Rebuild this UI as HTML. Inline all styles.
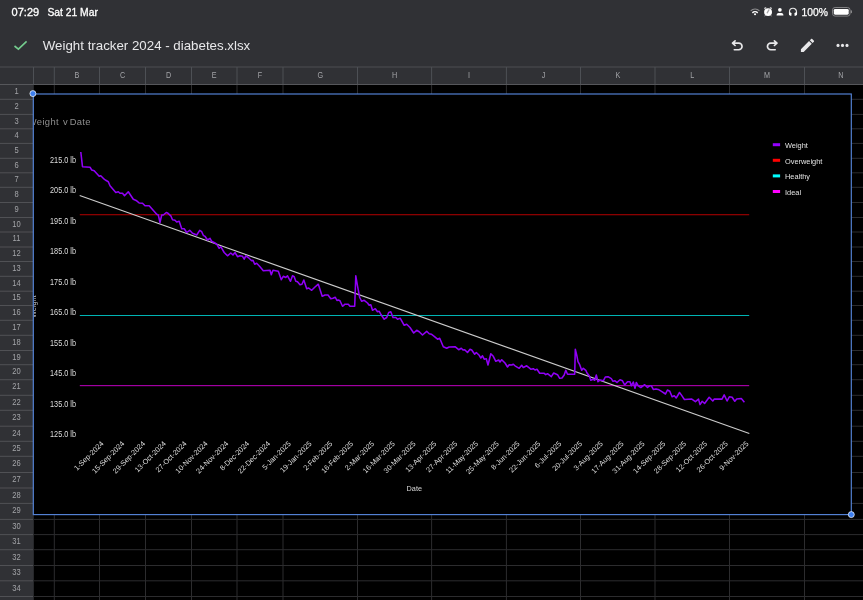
<!DOCTYPE html><html><head><meta charset="utf-8"><style>
html,body{margin:0;padding:0;width:863px;height:600px;overflow:hidden;background:#303135;}
svg{display:block;} body>svg{will-change:transform;}
text{font-family:"Liberation Sans",sans-serif;}
</style></head><body>
<svg width="863" height="600" viewBox="0 0 863 600">
<rect x="0" y="0" width="863" height="600" fill="#303135"/>

<text x="11.6" y="15.7" font-size="10.8" fill="#ffffff" stroke="#ffffff" stroke-width="0.3" textLength="27.6" lengthAdjust="spacingAndGlyphs">07:29</text>
<text x="47.4" y="15.7" font-size="10.8" fill="#ffffff" stroke="#ffffff" stroke-width="0.3" textLength="50.5" lengthAdjust="spacingAndGlyphs">Sat 21 Mar</text>
<text x="801.6" y="15.9" font-size="10.9" fill="#ffffff" stroke="#ffffff" stroke-width="0.25" textLength="26.4" lengthAdjust="spacingAndGlyphs">100%</text>
<rect x="832.5" y="7.5" width="17.6" height="8.6" rx="2.6" fill="none" stroke="#8a8a8c" stroke-width="0.9"/>
<rect x="833.8" y="8.9" width="14.9" height="5.8" rx="1.4" fill="#ffffff"/>
<rect x="850.8" y="10.2" width="1.2" height="3" rx="0.6" fill="#8a8a8c"/>
<path d="M750.67,10.82 A6.2,6.2 0 0 1 759.43,10.82" stroke="#8c8c8e" stroke-width="1.1" fill="none"/>
<path d="M752.4,12.85 A3.75,3.75 0 0 1 757.7,12.85" stroke="#ffffff" stroke-width="1.5" fill="none"/>
<circle cx="755.05" cy="14.3" r="1.05" fill="#fff"/>
<circle cx="768.05" cy="12.1" r="3.95" fill="#fff"/>
<ellipse cx="765.2" cy="8.1" rx="1.3" ry="0.9" transform="rotate(-40 765.2 8.1)" fill="#b8b8ba"/><ellipse cx="770.9" cy="8.1" rx="1.3" ry="0.9" transform="rotate(40 770.9 8.1)" fill="#b8b8ba"/>
<path d="M764.6,15.9 L765.8,15 M771.5,15.9 L770.3,15" stroke="#d0d0d2" stroke-width="0.9"/>
<path d="M767.2,12.8 L768.9,9.9" stroke="#a8a8aa" stroke-width="1.3" stroke-linecap="round"/>
<circle cx="779.9" cy="9.8" r="1.85" fill="#fff"/><path d="M776.6,15.5 V14.9 C776.6,13.3 778.2,13.0 780,13.0 C781.8,13.0 783.4,13.3 783.4,14.9 V15.5 Z" fill="#fff"/>
<path d="M789.5,14.0 V11.7 A3.5,3.5 0 0 1 796.5,11.7 V14.0" stroke="#e8e8e8" stroke-width="1.15" fill="none"/>
<path d="M789.0,12.3 Q790.6,12.0 791.6,13.2 L791.3,15.9 Q789.4,15.9 789.0,14.6 Z" fill="#fff"/><path d="M797.0,12.3 Q795.4,12.0 794.4,13.2 L794.7,15.9 Q796.6,15.9 797.0,14.6 Z" fill="#fff"/>
<path d="M14.5,46.0 L18.4,49.1 L26.6,41.3" stroke="#74cc8e" stroke-width="1.6" fill="none" stroke-linecap="butt"/>
<text x="42.8" y="49.8" font-size="13.3" fill="#e8e8ea">Weight tracker 2024 - diabetes.xlsx</text>
<path d="M734.3,49.75 H738.75 A3.3,3.3 0 0 0 738.75,43.15 H732.6 M735.1,40.8 L732.5,43.15 L735.1,45.5" stroke="#e8e8ea" stroke-width="1.65" fill="none" stroke-linecap="round" stroke-linejoin="round"/>
<g transform="translate(1509.5,0) scale(-1,1)"><path d="M734.3,49.75 H738.75 A3.3,3.3 0 0 0 738.75,43.15 H732.6 M735.1,40.8 L732.5,43.15 L735.1,45.5" stroke="#e8e8ea" stroke-width="1.65" fill="none" stroke-linecap="round" stroke-linejoin="round"/></g>
<g transform="translate(798.7,36.5) scale(0.735)"><path d="M3 17.25V21h3.75L17.81 9.94l-3.75-3.75L3 17.25zM20.71 7.04c.39-.39.39-1.02 0-1.41l-2.34-2.34c-.39-.39-1.02-.39-1.41 0l-1.83 1.83 3.75 3.75 1.83-1.83z" fill="#e8e8ea"/></g>
<circle cx="838" cy="45.4" r="1.55" fill="#e8e8ea"/>
<circle cx="842.5" cy="45.4" r="1.55" fill="#e8e8ea"/>
<circle cx="847" cy="45.4" r="1.55" fill="#e8e8ea"/>
<rect x="33.8" y="84.5" width="829.2" height="515.5" fill="#000"/>
<rect x="0" y="66.5" width="863" height="1" fill="#4d4e52"/>
<rect x="53.8" y="84.5" width="1" height="515.5" fill="#2c2c2e"/>
<rect x="99.0" y="84.5" width="1" height="515.5" fill="#2c2c2e"/>
<rect x="145.0" y="84.5" width="1" height="515.5" fill="#2c2c2e"/>
<rect x="191.0" y="84.5" width="1" height="515.5" fill="#2c2c2e"/>
<rect x="236.5" y="84.5" width="1" height="515.5" fill="#2c2c2e"/>
<rect x="282.5" y="84.5" width="1" height="515.5" fill="#2c2c2e"/>
<rect x="357.0" y="84.5" width="1" height="515.5" fill="#2c2c2e"/>
<rect x="431.1" y="84.5" width="1" height="515.5" fill="#2c2c2e"/>
<rect x="505.9" y="84.5" width="1" height="515.5" fill="#2c2c2e"/>
<rect x="580.0" y="84.5" width="1" height="515.5" fill="#2c2c2e"/>
<rect x="654.5" y="84.5" width="1" height="515.5" fill="#2c2c2e"/>
<rect x="729.0" y="84.5" width="1" height="515.5" fill="#2c2c2e"/>
<rect x="804.0" y="84.5" width="1" height="515.5" fill="#2c2c2e"/>
<rect x="33.5" y="98.8" width="829.5" height="1" fill="#2c2c2e"/>
<rect x="33.5" y="113.9" width="829.5" height="1" fill="#2c2c2e"/>
<rect x="33.5" y="128.3" width="829.5" height="1" fill="#2c2c2e"/>
<rect x="33.5" y="142.9" width="829.5" height="1" fill="#2c2c2e"/>
<rect x="33.5" y="157.8" width="829.5" height="1" fill="#2c2c2e"/>
<rect x="33.5" y="172.3" width="829.5" height="1" fill="#2c2c2e"/>
<rect x="33.5" y="186.8" width="829.5" height="1" fill="#2c2c2e"/>
<rect x="33.5" y="202.0" width="829.5" height="1" fill="#2c2c2e"/>
<rect x="33.5" y="217.0" width="829.5" height="1" fill="#2c2c2e"/>
<rect x="33.5" y="231.5" width="829.5" height="1" fill="#2c2c2e"/>
<rect x="33.5" y="246.5" width="829.5" height="1" fill="#2c2c2e"/>
<rect x="33.5" y="261.0" width="829.5" height="1" fill="#2c2c2e"/>
<rect x="33.5" y="275.8" width="829.5" height="1" fill="#2c2c2e"/>
<rect x="33.5" y="290.7" width="829.5" height="1" fill="#2c2c2e"/>
<rect x="33.5" y="305.0" width="829.5" height="1" fill="#2c2c2e"/>
<rect x="33.5" y="319.8" width="829.5" height="1" fill="#2c2c2e"/>
<rect x="33.5" y="334.8" width="829.5" height="1" fill="#2c2c2e"/>
<rect x="33.5" y="350.0" width="829.5" height="1" fill="#2c2c2e"/>
<rect x="33.5" y="364.2" width="829.5" height="1" fill="#2c2c2e"/>
<rect x="33.5" y="379.2" width="829.5" height="1" fill="#2c2c2e"/>
<rect x="33.5" y="394.8" width="829.5" height="1" fill="#2c2c2e"/>
<rect x="33.5" y="409.8" width="829.5" height="1" fill="#2c2c2e"/>
<rect x="33.5" y="425.7" width="829.5" height="1" fill="#2c2c2e"/>
<rect x="33.5" y="440.8" width="829.5" height="1" fill="#2c2c2e"/>
<rect x="33.5" y="455.8" width="829.5" height="1" fill="#2c2c2e"/>
<rect x="33.5" y="472.0" width="829.5" height="1" fill="#2c2c2e"/>
<rect x="33.5" y="487.5" width="829.5" height="1" fill="#2c2c2e"/>
<rect x="33.5" y="502.9" width="829.5" height="1" fill="#2c2c2e"/>
<rect x="33.5" y="518.9" width="829.5" height="1" fill="#2c2c2e"/>
<rect x="33.5" y="534.1" width="829.5" height="1" fill="#2c2c2e"/>
<rect x="33.5" y="549.2" width="829.5" height="1" fill="#2c2c2e"/>
<rect x="33.5" y="565.0" width="829.5" height="1" fill="#2c2c2e"/>
<rect x="33.5" y="580.3" width="829.5" height="1" fill="#2c2c2e"/>
<rect x="33.5" y="596.0" width="829.5" height="1" fill="#2c2c2e"/>
<rect x="53.8" y="67" width="1" height="17.5" fill="#4d5055"/>
<rect x="99.0" y="67" width="1" height="17.5" fill="#4d5055"/>
<rect x="145.0" y="67" width="1" height="17.5" fill="#4d5055"/>
<rect x="191.0" y="67" width="1" height="17.5" fill="#4d5055"/>
<rect x="236.5" y="67" width="1" height="17.5" fill="#4d5055"/>
<rect x="282.5" y="67" width="1" height="17.5" fill="#4d5055"/>
<rect x="357.0" y="67" width="1" height="17.5" fill="#4d5055"/>
<rect x="431.1" y="67" width="1" height="17.5" fill="#4d5055"/>
<rect x="505.9" y="67" width="1" height="17.5" fill="#4d5055"/>
<rect x="580.0" y="67" width="1" height="17.5" fill="#4d5055"/>
<rect x="654.5" y="67" width="1" height="17.5" fill="#4d5055"/>
<rect x="729.0" y="67" width="1" height="17.5" fill="#4d5055"/>
<rect x="804.0" y="67" width="1" height="17.5" fill="#4d5055"/>
<rect x="0" y="98.8" width="33" height="1" fill="#505155"/>
<rect x="0" y="113.9" width="33" height="1" fill="#505155"/>
<rect x="0" y="128.3" width="33" height="1" fill="#505155"/>
<rect x="0" y="142.9" width="33" height="1" fill="#505155"/>
<rect x="0" y="157.8" width="33" height="1" fill="#505155"/>
<rect x="0" y="172.3" width="33" height="1" fill="#505155"/>
<rect x="0" y="186.8" width="33" height="1" fill="#505155"/>
<rect x="0" y="202.0" width="33" height="1" fill="#505155"/>
<rect x="0" y="217.0" width="33" height="1" fill="#505155"/>
<rect x="0" y="231.5" width="33" height="1" fill="#505155"/>
<rect x="0" y="246.5" width="33" height="1" fill="#505155"/>
<rect x="0" y="261.0" width="33" height="1" fill="#505155"/>
<rect x="0" y="275.8" width="33" height="1" fill="#505155"/>
<rect x="0" y="290.7" width="33" height="1" fill="#505155"/>
<rect x="0" y="305.0" width="33" height="1" fill="#505155"/>
<rect x="0" y="319.8" width="33" height="1" fill="#505155"/>
<rect x="0" y="334.8" width="33" height="1" fill="#505155"/>
<rect x="0" y="350.0" width="33" height="1" fill="#505155"/>
<rect x="0" y="364.2" width="33" height="1" fill="#505155"/>
<rect x="0" y="379.2" width="33" height="1" fill="#505155"/>
<rect x="0" y="394.8" width="33" height="1" fill="#505155"/>
<rect x="0" y="409.8" width="33" height="1" fill="#505155"/>
<rect x="0" y="425.7" width="33" height="1" fill="#505155"/>
<rect x="0" y="440.8" width="33" height="1" fill="#505155"/>
<rect x="0" y="455.8" width="33" height="1" fill="#505155"/>
<rect x="0" y="472.0" width="33" height="1" fill="#505155"/>
<rect x="0" y="487.5" width="33" height="1" fill="#505155"/>
<rect x="0" y="502.9" width="33" height="1" fill="#505155"/>
<rect x="0" y="518.9" width="33" height="1" fill="#505155"/>
<rect x="0" y="534.1" width="33" height="1" fill="#505155"/>
<rect x="0" y="549.2" width="33" height="1" fill="#505155"/>
<rect x="0" y="565.0" width="33" height="1" fill="#505155"/>
<rect x="0" y="580.3" width="33" height="1" fill="#505155"/>
<rect x="0" y="596.0" width="33" height="1" fill="#505155"/>
<rect x="0" y="84" width="863" height="1" fill="#56575b"/>
<rect x="33" y="67" width="1" height="17.5" fill="#4d5055"/>
<text transform="translate(76.9,78) scale(0.84,1)" font-size="8.6" fill="#a3a4a8" text-anchor="middle">B</text>
<text transform="translate(122.5,78) scale(0.84,1)" font-size="8.6" fill="#a3a4a8" text-anchor="middle">C</text>
<text transform="translate(168.5,78) scale(0.84,1)" font-size="8.6" fill="#a3a4a8" text-anchor="middle">D</text>
<text transform="translate(214.2,78) scale(0.84,1)" font-size="8.6" fill="#a3a4a8" text-anchor="middle">E</text>
<text transform="translate(260.0,78) scale(0.84,1)" font-size="8.6" fill="#a3a4a8" text-anchor="middle">F</text>
<text transform="translate(320.2,78) scale(0.84,1)" font-size="8.6" fill="#a3a4a8" text-anchor="middle">G</text>
<text transform="translate(394.6,78) scale(0.84,1)" font-size="8.6" fill="#a3a4a8" text-anchor="middle">H</text>
<text transform="translate(469.0,78) scale(0.84,1)" font-size="8.6" fill="#a3a4a8" text-anchor="middle">I</text>
<text transform="translate(543.5,78) scale(0.84,1)" font-size="8.6" fill="#a3a4a8" text-anchor="middle">J</text>
<text transform="translate(617.8,78) scale(0.84,1)" font-size="8.6" fill="#a3a4a8" text-anchor="middle">K</text>
<text transform="translate(692.2,78) scale(0.84,1)" font-size="8.6" fill="#a3a4a8" text-anchor="middle">L</text>
<text transform="translate(767.0,78) scale(0.84,1)" font-size="8.6" fill="#a3a4a8" text-anchor="middle">M</text>
<text transform="translate(840.8,78) scale(0.84,1)" font-size="8.6" fill="#a3a4a8" text-anchor="middle">N</text>
<text transform="translate(16.5,93.9) scale(0.9,1)" font-size="8.4" fill="#a3a4a8" text-anchor="middle">1</text>
<text transform="translate(16.5,108.8) scale(0.9,1)" font-size="8.4" fill="#a3a4a8" text-anchor="middle">2</text>
<text transform="translate(16.5,123.6) scale(0.9,1)" font-size="8.4" fill="#a3a4a8" text-anchor="middle">3</text>
<text transform="translate(16.5,138.1) scale(0.9,1)" font-size="8.4" fill="#a3a4a8" text-anchor="middle">4</text>
<text transform="translate(16.5,152.8) scale(0.9,1)" font-size="8.4" fill="#a3a4a8" text-anchor="middle">5</text>
<text transform="translate(16.5,167.5) scale(0.9,1)" font-size="8.4" fill="#a3a4a8" text-anchor="middle">6</text>
<text transform="translate(16.5,182.0) scale(0.9,1)" font-size="8.4" fill="#a3a4a8" text-anchor="middle">7</text>
<text transform="translate(16.5,196.8) scale(0.9,1)" font-size="8.4" fill="#a3a4a8" text-anchor="middle">8</text>
<text transform="translate(16.5,211.9) scale(0.9,1)" font-size="8.4" fill="#a3a4a8" text-anchor="middle">9</text>
<text transform="translate(16.5,226.7) scale(0.9,1)" font-size="8.4" fill="#a3a4a8" text-anchor="middle">10</text>
<text transform="translate(16.5,241.4) scale(0.9,1)" font-size="8.4" fill="#a3a4a8" text-anchor="middle">11</text>
<text transform="translate(16.5,256.2) scale(0.9,1)" font-size="8.4" fill="#a3a4a8" text-anchor="middle">12</text>
<text transform="translate(16.5,270.8) scale(0.9,1)" font-size="8.4" fill="#a3a4a8" text-anchor="middle">13</text>
<text transform="translate(16.5,285.7) scale(0.9,1)" font-size="8.4" fill="#a3a4a8" text-anchor="middle">14</text>
<text transform="translate(16.5,300.3) scale(0.9,1)" font-size="8.4" fill="#a3a4a8" text-anchor="middle">15</text>
<text transform="translate(16.5,314.8) scale(0.9,1)" font-size="8.4" fill="#a3a4a8" text-anchor="middle">16</text>
<text transform="translate(16.5,329.8) scale(0.9,1)" font-size="8.4" fill="#a3a4a8" text-anchor="middle">17</text>
<text transform="translate(16.5,344.8) scale(0.9,1)" font-size="8.4" fill="#a3a4a8" text-anchor="middle">18</text>
<text transform="translate(16.5,359.6) scale(0.9,1)" font-size="8.4" fill="#a3a4a8" text-anchor="middle">19</text>
<text transform="translate(16.5,374.1) scale(0.9,1)" font-size="8.4" fill="#a3a4a8" text-anchor="middle">20</text>
<text transform="translate(16.5,389.4) scale(0.9,1)" font-size="8.4" fill="#a3a4a8" text-anchor="middle">21</text>
<text transform="translate(16.5,404.8) scale(0.9,1)" font-size="8.4" fill="#a3a4a8" text-anchor="middle">22</text>
<text transform="translate(16.5,420.2) scale(0.9,1)" font-size="8.4" fill="#a3a4a8" text-anchor="middle">23</text>
<text transform="translate(16.5,435.7) scale(0.9,1)" font-size="8.4" fill="#a3a4a8" text-anchor="middle">24</text>
<text transform="translate(16.5,450.8) scale(0.9,1)" font-size="8.4" fill="#a3a4a8" text-anchor="middle">25</text>
<text transform="translate(16.5,466.3) scale(0.9,1)" font-size="8.4" fill="#a3a4a8" text-anchor="middle">26</text>
<text transform="translate(16.5,482.2) scale(0.9,1)" font-size="8.4" fill="#a3a4a8" text-anchor="middle">27</text>
<text transform="translate(16.5,497.6) scale(0.9,1)" font-size="8.4" fill="#a3a4a8" text-anchor="middle">28</text>
<text transform="translate(16.5,513.4) scale(0.9,1)" font-size="8.4" fill="#a3a4a8" text-anchor="middle">29</text>
<text transform="translate(16.5,529.0) scale(0.9,1)" font-size="8.4" fill="#a3a4a8" text-anchor="middle">30</text>
<text transform="translate(16.5,544.1) scale(0.9,1)" font-size="8.4" fill="#a3a4a8" text-anchor="middle">31</text>
<text transform="translate(16.5,559.6) scale(0.9,1)" font-size="8.4" fill="#a3a4a8" text-anchor="middle">32</text>
<text transform="translate(16.5,575.1) scale(0.9,1)" font-size="8.4" fill="#a3a4a8" text-anchor="middle">33</text>
<text transform="translate(16.5,590.6) scale(0.9,1)" font-size="8.4" fill="#a3a4a8" text-anchor="middle">34</text>
<svg x="33.5" y="94" width="818" height="420" overflow="hidden"><g transform="translate(-33.5,-94)">
<rect x="33.5" y="94" width="818" height="420" fill="#000"/>
<text x="27.8" y="124.6" font-size="9.4" fill="#8f8f8f" letter-spacing="0.36">Weight</text>
<text x="62.9" y="124.6" font-size="9.4" fill="#8f8f8f">v</text>
<text x="69.7" y="124.6" font-size="9.4" fill="#8f8f8f" letter-spacing="0.33">Date</text>
<text transform="translate(35.9,306.7) rotate(-90)" font-size="7.2" fill="#d0d0d0" text-anchor="middle">Weight</text>
<text x="76" y="162.8" font-size="8.25" fill="#dedede" text-anchor="end" textLength="26" lengthAdjust="spacingAndGlyphs">215.0 lb</text>
<text x="76" y="193.3" font-size="8.25" fill="#dedede" text-anchor="end" textLength="26" lengthAdjust="spacingAndGlyphs">205.0 lb</text>
<text x="76" y="223.8" font-size="8.25" fill="#dedede" text-anchor="end" textLength="26" lengthAdjust="spacingAndGlyphs">195.0 lb</text>
<text x="76" y="254.3" font-size="8.25" fill="#dedede" text-anchor="end" textLength="26" lengthAdjust="spacingAndGlyphs">185.0 lb</text>
<text x="76" y="284.8" font-size="8.25" fill="#dedede" text-anchor="end" textLength="26" lengthAdjust="spacingAndGlyphs">175.0 lb</text>
<text x="76" y="315.3" font-size="8.25" fill="#dedede" text-anchor="end" textLength="26" lengthAdjust="spacingAndGlyphs">165.0 lb</text>
<text x="76" y="345.8" font-size="8.25" fill="#dedede" text-anchor="end" textLength="26" lengthAdjust="spacingAndGlyphs">155.0 lb</text>
<text x="76" y="376.3" font-size="8.25" fill="#dedede" text-anchor="end" textLength="26" lengthAdjust="spacingAndGlyphs">145.0 lb</text>
<text x="76" y="406.8" font-size="8.25" fill="#dedede" text-anchor="end" textLength="26" lengthAdjust="spacingAndGlyphs">135.0 lb</text>
<text x="76" y="437.3" font-size="8.25" fill="#dedede" text-anchor="end" textLength="26" lengthAdjust="spacingAndGlyphs">125.0 lb</text>
<rect x="79.8" y="214" width="669.4" height="1" fill="#8a0000"/><rect x="79.8" y="215" width="669.4" height="1" fill="#2a0000"/>
<rect x="79.8" y="315" width="669.4" height="1" fill="#00b4b4"/>
<rect x="79.8" y="385" width="669.4" height="1" fill="#a200a2"/><rect x="79.8" y="386" width="669.4" height="1" fill="#200020"/>
<line x1="79.7" y1="195.5" x2="749.3" y2="433.4" stroke="#cccccc" stroke-width="1.1"/>
<polyline points="80.8,152 82.5,166.7 90,167.2 91.7,170 94.2,170.8 99.2,176.3 100.8,175.8 104.2,179.2 105.8,180.3 108.3,181.7 110,185.8 115.8,192.5 118.3,191.7 120,193.3 122.5,193.3 124.5,195.8 128.3,191.7 133.3,199.2 136.7,200.8 139.2,203 142.5,203.3 145,205.8 149.2,205.8 156.7,214.2 158.3,215 160,222.5 161.7,215 163.3,215 166.3,212.5 168,213.3 170.8,215.8 172.5,219.7 175,220.3 176.7,222 179.2,221.3 181.7,228.7 184.2,228.7 186.7,232.5 189.7,230.3 192.5,233.3 196.7,235 199.7,230.3 201.7,231.7 203.3,235.3 205,236.3 207.5,240 210,238.3 211.7,241.3 215,243 216.7,244.2 219.2,248.3 220.8,246.7 224.2,252.5 227.5,255.8 230.8,253 233,255 235,252.5 237.5,256.7 240,255.8 242.5,256.3 244.2,259.2 245.8,255.8 248.3,257.5 251.7,260.8 253,260.3 254.7,264.2 256.7,263.3 260,266.7 263.3,270.8 270,270.3 271.3,274.7 273,270.3 278.3,271.3 281.3,279.7 283.3,276.3 285.8,277.5 287.5,275.8 290.5,281.3 292.5,275.8 294.2,276.7 295.8,281.3 297.5,281.7 300,284.7 302,284.2 303.8,280 306.7,288.7 308.7,288 311.7,290.3 315,287 318.3,284.2 322.2,296.3 325,295 328,295 330.8,298.7 333,298.3 335.3,297.3 337,300.5 338.3,300 340,300.8 342.5,306.3 345,304.2 348.3,304.2 350,306.3 354.7,306.3 355.8,275.8 357.5,285.8 359.7,297.5 361.7,301.3 364.2,300.3 367.5,303 369.2,305.3 370.8,304.7 372.5,310.3 375.3,308.7 377.5,311.7 379.2,311.3 380.8,314.2 384.2,319.2 386.7,317.5 388.7,312.5 390.8,311.7 393,317.5 395.8,317.5 397.5,319.2 400.3,318.3 404.2,325.3 406.7,324.2 410,327.5 413.7,333 416.7,330.3 419.2,331.7 422.5,335 426.7,331.3 429.2,333.7 431.3,334.2 434.2,336.3 437.5,339.2 439.7,338.3 443.3,346.7 446.7,348.3 449.2,347 455,346.7 458.7,349.7 461.3,348.3 463,350 464.7,349.7 467.5,352.5 470,349.2 471.7,350 474.7,354.2 476.3,352.5 479.2,355.3 480.8,358 482.5,355.8 484.2,359.2 486.3,358.7 488,365 490.8,353.7 493.3,356.3 495.8,361.3 498.7,360 500,362 501.7,359.7 505,363 507.5,367 509.2,364.7 511.7,365 513.3,364.2 515,365.8 519.2,368.3 521.7,365.3 523.3,367.5 526.7,365.8 530.8,369.2 533.3,368.7 535,370 537,369.2 539.7,373.3 544.2,373.3 545.8,374.7 547.5,373.7 551.3,376.7 553.7,373 557.5,374.7 559.7,378.3 562,378 564.2,375 565.8,370.3 567.5,374.2 574.7,374.2 575.3,349.2 576.7,355 578,361.7 579.7,364.7 581.7,370.3 583.3,368.3 585.8,370.3 587,373 589.2,375.8 590.8,380.3 593,379.2 594.7,380.3 596.3,375 598,381.7 600.3,380 603.3,380.8 605.3,377 608,376.7 611.3,378.7 613,381.3 615,380.8 617,382.5 620,379.7 622.5,380.8 624.7,385 627.5,381.7 630,381.7 631.3,385.8 633.3,382 635,388.3 636.3,382.5 638.3,385.8 640.8,387.5 644.7,384.7 647.5,387.5 649.6,385.8 651.4,385.8 653.3,389.4 656,388.9 658.2,389.4 661.5,391.3 665.5,394 667.4,390 669.8,391.3 672.1,396.8 674.3,395.8 676.2,398 679.5,392.5 681.3,394.9 684.4,399.5 691.8,399.1 695.4,401.7 698.5,399.1 700,404.6 702.2,401.3 704.6,403.5 709.2,397.3 712.8,401 714.3,399.1 722,399.1 724.2,394.9 727.1,401 729.3,396.8 732.1,397.3 734.8,401.3 736.7,399.1 741.3,398.6 744.4,402.3" fill="none" stroke="#9000f6" stroke-width="1.55" stroke-linejoin="round"/>
<text transform="translate(104.0,444.1) rotate(-45)" font-size="7.3" fill="#dedede" text-anchor="end">1-Sep-2024</text>
<text transform="translate(124.8,444.1) rotate(-45)" font-size="7.3" fill="#dedede" text-anchor="end">15-Sep-2024</text>
<text transform="translate(145.6,444.1) rotate(-45)" font-size="7.3" fill="#dedede" text-anchor="end">29-Sep-2024</text>
<text transform="translate(166.4,444.1) rotate(-45)" font-size="7.3" fill="#dedede" text-anchor="end">13-Oct-2024</text>
<text transform="translate(187.2,444.1) rotate(-45)" font-size="7.3" fill="#dedede" text-anchor="end">27-Oct-2024</text>
<text transform="translate(208.1,444.1) rotate(-45)" font-size="7.3" fill="#dedede" text-anchor="end">10-Nov-2024</text>
<text transform="translate(228.9,444.1) rotate(-45)" font-size="7.3" fill="#dedede" text-anchor="end">24-Nov-2024</text>
<text transform="translate(249.7,444.1) rotate(-45)" font-size="7.3" fill="#dedede" text-anchor="end">8-Dec-2024</text>
<text transform="translate(270.5,444.1) rotate(-45)" font-size="7.3" fill="#dedede" text-anchor="end">22-Dec-2024</text>
<text transform="translate(291.3,444.1) rotate(-45)" font-size="7.3" fill="#dedede" text-anchor="end">5-Jan-2025</text>
<text transform="translate(312.1,444.1) rotate(-45)" font-size="7.3" fill="#dedede" text-anchor="end">19-Jan-2025</text>
<text transform="translate(332.9,444.1) rotate(-45)" font-size="7.3" fill="#dedede" text-anchor="end">2-Feb-2025</text>
<text transform="translate(353.7,444.1) rotate(-45)" font-size="7.3" fill="#dedede" text-anchor="end">16-Feb-2025</text>
<text transform="translate(374.5,444.1) rotate(-45)" font-size="7.3" fill="#dedede" text-anchor="end">2-Mar-2025</text>
<text transform="translate(395.3,444.1) rotate(-45)" font-size="7.3" fill="#dedede" text-anchor="end">16-Mar-2025</text>
<text transform="translate(416.1,444.1) rotate(-45)" font-size="7.3" fill="#dedede" text-anchor="end">30-Mar-2025</text>
<text transform="translate(437.0,444.1) rotate(-45)" font-size="7.3" fill="#dedede" text-anchor="end">13-Apr-2025</text>
<text transform="translate(457.8,444.1) rotate(-45)" font-size="7.3" fill="#dedede" text-anchor="end">27-Apr-2025</text>
<text transform="translate(478.6,444.1) rotate(-45)" font-size="7.3" fill="#dedede" text-anchor="end">11-May-2025</text>
<text transform="translate(499.4,444.1) rotate(-45)" font-size="7.3" fill="#dedede" text-anchor="end">25-May-2025</text>
<text transform="translate(520.2,444.1) rotate(-45)" font-size="7.3" fill="#dedede" text-anchor="end">8-Jun-2025</text>
<text transform="translate(541.0,444.1) rotate(-45)" font-size="7.3" fill="#dedede" text-anchor="end">22-Jun-2025</text>
<text transform="translate(561.8,444.1) rotate(-45)" font-size="7.3" fill="#dedede" text-anchor="end">6-Jul-2025</text>
<text transform="translate(582.6,444.1) rotate(-45)" font-size="7.3" fill="#dedede" text-anchor="end">20-Jul-2025</text>
<text transform="translate(603.4,444.1) rotate(-45)" font-size="7.3" fill="#dedede" text-anchor="end">3-Aug-2025</text>
<text transform="translate(624.2,444.1) rotate(-45)" font-size="7.3" fill="#dedede" text-anchor="end">17-Aug-2025</text>
<text transform="translate(645.1,444.1) rotate(-45)" font-size="7.3" fill="#dedede" text-anchor="end">31-Aug-2025</text>
<text transform="translate(665.9,444.1) rotate(-45)" font-size="7.3" fill="#dedede" text-anchor="end">14-Sep-2025</text>
<text transform="translate(686.7,444.1) rotate(-45)" font-size="7.3" fill="#dedede" text-anchor="end">28-Sep-2025</text>
<text transform="translate(707.5,444.1) rotate(-45)" font-size="7.3" fill="#dedede" text-anchor="end">12-Oct-2025</text>
<text transform="translate(728.3,444.1) rotate(-45)" font-size="7.3" fill="#dedede" text-anchor="end">26-Oct-2025</text>
<text transform="translate(749.1,444.1) rotate(-45)" font-size="7.3" fill="#dedede" text-anchor="end">9-Nov-2025</text>
<text x="414.3" y="491.1" font-size="7.3" fill="#d8d8d8" text-anchor="middle">Date</text>
<rect x="772.8" y="143.2" width="7.3" height="3" fill="#9400ff"/>
<text x="785" y="148.0" font-size="7.4" fill="#e2e2e2">Weight</text>
<rect x="772.8" y="158.8" width="7.3" height="3" fill="#ff0000"/>
<text x="785" y="163.6" font-size="7.4" fill="#e2e2e2">Overweight</text>
<rect x="772.8" y="174.4" width="7.3" height="3" fill="#00ffff"/>
<text x="785" y="179.2" font-size="7.4" fill="#e2e2e2">Healthy</text>
<rect x="772.8" y="190.0" width="7.3" height="3" fill="#ff00ff"/>
<text x="785" y="194.8" font-size="7.4" fill="#e2e2e2">Ideal</text>
</g></svg>
<rect x="33.3" y="94" width="818" height="420.6" fill="none" stroke="#5585da" stroke-width="1.15"/>
<circle cx="32.9" cy="93.6" r="3" fill="#3d7ff0" stroke="#ffffff" stroke-width="0.7"/>
<circle cx="851.3" cy="514.6" r="3" fill="#3d7ff0" stroke="#ffffff" stroke-width="0.7"/>
</svg></body></html>
